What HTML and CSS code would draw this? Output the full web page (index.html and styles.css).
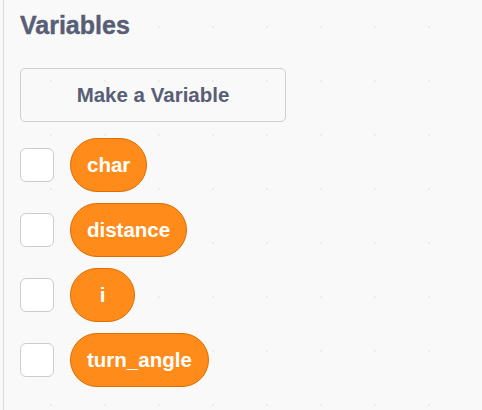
FILE: index.html
```html
<!DOCTYPE html>
<html>
<head>
<meta charset="utf-8">
<link rel="stylesheet" href="styles.css">
</head>
<body>
<div class="panel">
  <div class="title">Variables</div>
  <div class="make-btn">Make a Variable</div>
  <div class="vars">
    <div class="row"><span class="check"></span><span class="pill">char</span></div>
    <div class="row"><span class="check"></span><span class="pill">distance</span></div>
    <div class="row"><span class="check"></span><span class="pill">i</span></div>
    <div class="row"><span class="check"></span><span class="pill">turn_angle</span></div>
  </div>
</div>
</body>
</html>
```
FILE: styles.css
```css
html, body {
  margin: 0;
  padding: 0;
  height: 100%;
}
body {
  background-color: #f9f9f9;
  background-image: radial-gradient(circle, #ececec 0, #ececec 1px, transparent 1.6px);
  background-size: 54px 54px;
  background-position: 24px 0;
  font-family: "Liberation Sans", Arial, sans-serif;
  overflow: hidden;
}
.panel {
  margin-left: 3px;
  border-left: 1px solid #dcdcdc;
  height: 100%;
  box-sizing: border-box;
  padding-left: 16px;
  padding-top: 10px;
}
.title {
  font-size: 25px;
  line-height: 30px;
  font-weight: 700;
  color: #575e75;
  -webkit-text-stroke: 0.4px #575e75;
}
.make-btn {
  margin-top: 28px;
  width: 266px;
  height: 54px;
  box-sizing: border-box;
  border: 1px solid #cfcfcf;
  border-radius: 5px;
  display: flex;
  align-items: center;
  justify-content: center;
  font-size: 20.5px;
  font-weight: 700;
  color: #575e75;
}
.vars {
  margin-top: 16px;
  display: flex;
  flex-direction: column;
  gap: 11px;
}
.row {
  display: flex;
  align-items: center;
  gap: 16px;
  height: 54px;
}
.check {
  width: 34px;
  height: 34px;
  box-sizing: border-box;
  border: 1px solid #cccccc;
  border-radius: 6px;
  background: #ffffff;
}
.pill {
  height: 54px;
  min-width: 65px;
  box-sizing: border-box;
  padding: 0 16px;
  border: 1px solid #db6e00;
  border-radius: 27px;
  background: #ff8c1a;
  color: #ffffff;
  font-size: 20.5px;
  font-weight: 700;
  display: flex;
  align-items: center;
  justify-content: center;
}
```
